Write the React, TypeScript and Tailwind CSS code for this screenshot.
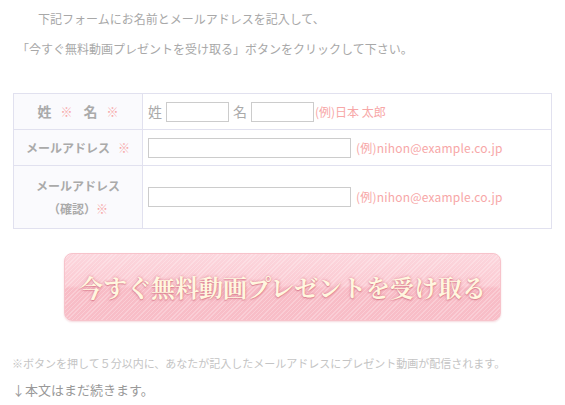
import React from "react";

const jp = "font-['Noto_Sans_CJK_JP','Noto_Sans',sans-serif]";

export default function App() {
  return (
    <div className={`w-[565px] h-[405px] bg-white overflow-hidden ${jp}`}>
      <div className="pt-[4px] pl-[17px] text-[12px] leading-[30px] text-[#a8a8a8]">
        <p className="indent-[21px]">下記フォームにお名前とメールアドレスを記入して、</p>
        <p>「今すぐ無料動画プレゼントを受け取る」ボタンをクリックして下さい。</p>
      </div>

      <table className="mt-[29px] ml-[13px] w-[539px] border-collapse">
        <tbody>
          <tr className="h-[36px]">
            <td className="w-[129px] border border-[#e1e1ef] bg-[#fafafd] text-center font-bold text-[#aaaaaa] text-[14px]">
              <span>姓</span>
              <span className="ml-[9px] text-[12px] text-[#f7a7a7] font-normal">※</span>
              <span className="ml-[11px]">名</span>
              <span className="ml-[9px] text-[12px] text-[#f7a7a7] font-normal">※</span>
            </td>
            <td className="border border-[#e1e1ef] pl-[5px]">
              <div className="flex items-center text-[14px] text-[#aaaaaa]">
                <span>姓</span>
                <div className="ml-[4px] w-[63px] h-[20px] border border-[#cccccc]" />
                <span className="ml-[4px]">名</span>
                <div className="ml-[4px] w-[63px] h-[20px] border border-[#cccccc]" />
                <span className="ml-[1px] text-[12px] text-[#f7a7a7]">(例)日本 太郎</span>
              </div>
            </td>
          </tr>
          <tr className="h-[36px]">
            <td className="border border-[#e1e1ef] bg-[#fafafd] text-center font-bold text-[#aaaaaa] text-[12px]">
              メールアドレス<span className="ml-[8px] text-[#f7a7a7] font-normal">※</span>
            </td>
            <td className="border border-[#e1e1ef] pl-[5px]">
              <div className="flex items-center">
                <div className="w-[203px] h-[20px] border border-[#cccccc]" />
                <span className="ml-[5px] text-[12px] tracking-[0.2px] text-[#f7a7a7]">(例)nihon@example.co.jp</span>
              </div>
            </td>
          </tr>
          <tr className="h-[63px]">
            <td className="border border-[#e1e1ef] bg-[#fafafd] text-center font-bold text-[#aaaaaa] text-[12px] leading-[23px]">
              <div>メールアドレス</div>
              <div>
                （確認）<span className="text-[#f7a7a7] font-normal">※</span>
              </div>
            </td>
            <td className="border border-[#e1e1ef] pl-[5px]">
              <div className="flex items-center">
                <div className="w-[203px] h-[20px] border border-[#cccccc]" />
                <span className="ml-[5px] text-[12px] tracking-[0.2px] text-[#f7a7a7]">(例)nihon@example.co.jp</span>
              </div>
            </td>
          </tr>
        </tbody>
      </table>

      <div className="mt-[24px] flex justify-center">
        <div className="relative w-[437px] h-[68px] rounded-[8px] border border-[#f7c3cb] overflow-hidden bg-[image:repeating-linear-gradient(135deg,rgba(255,255,255,0.25)_0px,rgba(255,255,255,0.25)_1px,transparent_1px,transparent_3px),linear-gradient(to_bottom,#fcd6dd_0%,#fbcbd3_48%,#f8bcc6_52%,#f8bec8_100%)] shadow-[0_1px_2px_rgba(230,160,172,0.4)] flex items-center justify-center">
          <span className="font-['Noto_Serif_CJK_JP','Noto_Sans_CJK_JP',serif] font-bold text-[24px] leading-none text-[#fff7df] [text-shadow:0_0_3px_rgba(215,110,130,0.85),0_1px_1px_rgba(200,90,110,0.5)]">
            今すぐ無料動画プレゼントを受け取る
          </span>
        </div>
      </div>

      <div className="mt-[34px] pl-[12px]">
        <p className="text-[11px] leading-[16px] text-[#c4c4c4]">
          ※ボタンを押して５分以内に、あなたが記入したメールアドレスにプレゼント動画が配信されます。
        </p>
        <p className="mt-[10px] text-[13px] leading-[18px] font-normal text-[#999999]">↓本文はまだ続きます。</p>
      </div>
    </div>
  );
}
